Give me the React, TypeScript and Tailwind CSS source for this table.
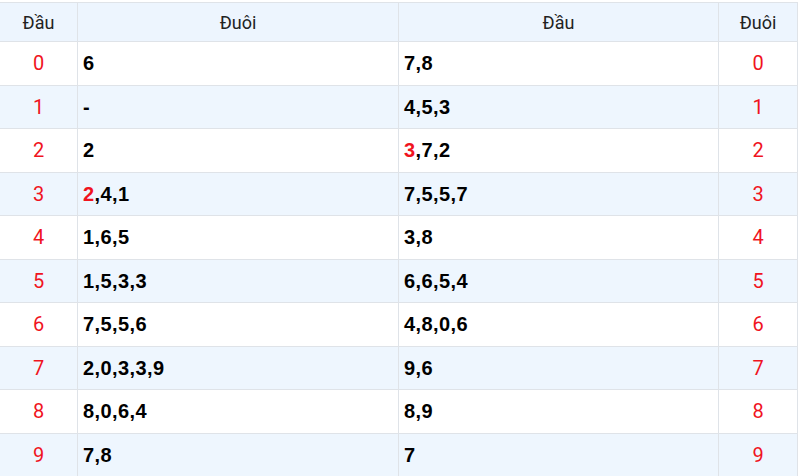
const rows: { d: number; duoi: string; hiDuoi?: boolean; dau: string; hiDau?: boolean }[] = [
  { d: 0, duoi: '6', dau: '7,8' },
  { d: 1, duoi: '-', dau: '4,5,3' },
  { d: 2, duoi: '2', dau: '3,7,2', hiDau: true },
  { d: 3, duoi: '2,4,1', hiDuoi: true, dau: '7,5,5,7' },
  { d: 4, duoi: '1,6,5', dau: '3,8' },
  { d: 5, duoi: '1,5,3,3', dau: '6,6,5,4' },
  { d: 6, duoi: '7,5,5,6', dau: '4,8,0,6' },
  { d: 7, duoi: '2,0,3,3,9', dau: '9,6' },
  { d: 8, duoi: '8,0,6,4', dau: '8,9' },
  { d: 9, duoi: '7,8', dau: '7' },
]

function Nums({ text, hi }: { text: string; hi?: boolean }) {
  if (!hi) return <>{text}</>
  const [first, ...rest] = text.split(',')
  return (
    <>
      <span className="text-[#f0141e]">{first}</span>,{rest.join(',')}
    </>
  )
}

export default function App() {
  return (
    <div className="w-[800px] h-[476px] overflow-hidden bg-white pt-[2px] font-['Roboto',sans-serif]">
      <table className="table-fixed border-collapse w-[798px] -ml-px">
        <colgroup>
          <col className="w-[78px]" />
          <col className="w-[321px]" />
          <col className="w-[320px]" />
          <col className="w-[79px]" />
        </colgroup>
        <thead>
          <tr className="h-[39px] bg-[#edf5fe] text-[18px] text-[#222]">
            <th className="border border-[#dfe3e8] font-normal">Đầu</th>
            <th className="border border-[#dfe3e8] font-normal">Đuôi</th>
            <th className="border border-[#dfe3e8] font-normal">Đầu</th>
            <th className="border border-[#dfe3e8] font-normal">Đuôi</th>
          </tr>
        </thead>
        <tbody>
          {rows.map((r, i) => (
            <tr key={r.d} className={`h-[43.5px] ${i % 2 === 1 ? 'bg-[#eef6fe]' : 'bg-white'}`}>
              <td className="border border-[#dfe3e8] text-center text-[20px] text-[#f0141e]">{r.d}</td>
              <td className="border border-[#dfe3e8] pl-[5px] text-[20px] font-bold text-black font-['Liberation_Sans',sans-serif] tracking-[0.4px]">
                <Nums text={r.duoi} hi={r.hiDuoi} />
              </td>
              <td className="border border-[#dfe3e8] pl-[5px] text-[20px] font-bold text-black font-['Liberation_Sans',sans-serif] tracking-[0.4px]">
                <Nums text={r.dau} hi={r.hiDau} />
              </td>
              <td className="border border-[#dfe3e8] text-center text-[20px] text-[#f0141e]">{r.d}</td>
            </tr>
          ))}
        </tbody>
      </table>
    </div>
  )
}
